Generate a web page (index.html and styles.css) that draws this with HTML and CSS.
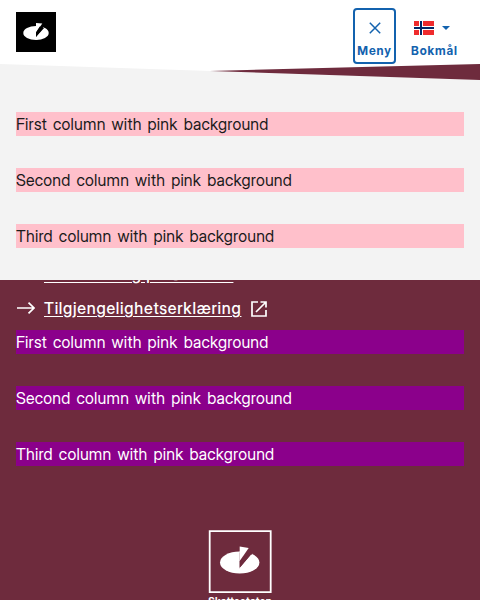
FILE: index.html
```html
<!DOCTYPE html>
<html lang="nb">
<head>
<meta charset="utf-8">
<title>Skatteetaten</title>
<link rel="stylesheet" href="styles.css">
</head>
<body>
<header class="header">
  <svg class="logo" viewBox="0 0 40 40" aria-hidden="true"><path fill="#000" d="M0 0h40v40H0z"/><ellipse cx="20" cy="21" rx="12.700" ry="6.900" fill="#fff"/><path d="M20 15.500v12l8-10.500-3-5h-3z" fill="#000"/><path d="M20 11l6.300.4-6.300 9z" fill="#fff"/><path d="M20 27.900v-3.500l7-8 3 1.500v5z" fill="#fff"/><path d="M20 20.500v4.500l7.500-8.500-3.700-2z" fill="#000"/></svg>
  <div class="actions">
    <button class="action action-open">
      <svg class="close" viewBox="0 0 12 12"><path d="M.8.8l10.400 10.400M11.200.8L.8 11.200"/></svg>
      <span>Meny</span>
    </button>
    <button class="action">
      <span class="language">
        <svg class="flag" viewBox="0 0 20 14"><path fill="#ef2b2d" d="M0 0h20v14H0z"/><path fill="#fff" d="M5 0h4v14H5zM0 5h20v4H0z"/><path fill="#002868" d="M6 0h2v14H6zM0 6h20v2H0z"/></svg>
        <svg class="caret" viewBox="0 0 8 4"><path d="M0 0h8L4 4z"/></svg>
      </span>
      <span>Bokmål</span>
    </button>
  </div>
</header>
<main class="main">
  <svg class="wedge" viewBox="0 0 480 16" preserveAspectRatio="none"><path fill="#fff" d="M0 0h480v16z"/><path fill="#6e2b3d" d="M480 0L210 7l270 9z"/></svg>
  <div class="columns">
    <div>First column with pink background</div>
    <div>Second column with pink background</div>
    <div>Third column with pink background</div>
  </div>
</main>
<footer class="footer">
  <div class="links">
    <a class="link" href="#"><svg class="arrow" viewBox="0 0 18 12"><path d="M0 6h17M11.500.6L17 6l-5.500 5.400"/></svg><span>Sikkerhet og personvern</span></a>
    <a class="link" href="#"><svg class="arrow" viewBox="0 0 18 12"><path d="M0 6h17M11.500.6L17 6l-5.500 5.400"/></svg><span>Tilgjengelighetserklæring</span><svg class="external" viewBox="0 0 16 16"><path d="M7 1H1v14h14V9M9.500 1H15v5.500M15 1L5 11"/></svg></a>
  </div>
  <div class="columns columns-purple">
    <div>First column with pink background</div>
    <div>Second column with pink background</div>
    <div>Third column with pink background</div>
  </div>
  <div class="brand">
    <svg class="emblem" viewBox="0 0 64 64"><path d="M1.700 1.200h61v61h-61z" fill="none" stroke="#fff" stroke-width="1.800"/><ellipse cx="31.700" cy="32.500" rx="19.700" ry="11" fill="#fff"/><path d="M31.700 32.500v-10l5-4h3l5 5-13 15z" fill="#6e2b3d"/><path d="M31.700 16.500l9 1.500-9 13z" fill="#fff"/><path d="M31.700 38.500v-.5l11.300-13.500 4 3-4 7z" fill="#fff"/><path d="M31.700 31.500v6L43 24.500l-3-1.500z" fill="#6e2b3d"/></svg>
    <span>Skatteetaten</span>
  </div>
</footer>
</body>
</html>
```
FILE: styles.css
```css
* { box-sizing: border-box; }
body {
  margin: 0;
  height: 600px;
  overflow: hidden;
  font: 16px/24px "Inter Display", Inter, sans-serif;
  letter-spacing: .2px;
  word-spacing: 1.8px;
  color: #1b1b1b;
  background: #6e2b3d;
}
svg { display: block; flex: none; }
.header {
  display: flex;
  justify-content: space-between;
  height: 64px;
  padding: 8px 21px 0 16px;
  background: #fff;
}
.logo { width: 40px; height: 40px; margin-top: 4px; }
.actions { display: flex; gap: 14px; }
.action {
  display: flex;
  flex-direction: column;
  align-items: center;
  width: 49px;
  height: 56px;
  padding: 12px 0 0;
  border: 0;
  background: none;
  color: #1362ae;
  font: 700 12px/16px "Inter Display", Inter, sans-serif;
  letter-spacing: .9px;
  white-space: nowrap;
}
.action > span:last-child { margin-top: auto; margin-bottom: 5px; }
.action-open {
  width: 43px;
  border: 2px solid #1362ae;
  border-radius: 4px;
}
.action-open > span:last-child { margin-bottom: 3px; }
.close { width: 12px; height: 12px; fill: none; stroke: #1362ae; stroke-width: 1.5; }
.language { display: flex; align-items: center; gap: 8px; margin: 1px 6px 0 0; }
.flag { width: 20px; height: 14px; }
.caret { width: 8px; height: 4px; fill: #1362ae; }
.main { height: 216px; background: #f3f3f3; }
.wedge { width: 100%; height: 16px; }
.columns { display: grid; gap: 32px; margin: 32px 16px 0; }
.columns > div { background: pink; }
.footer { color: #fff; }
.links {
  display: flex;
  flex-direction: column;
  justify-content: flex-end;
  gap: 10px;
  height: 40px;
  overflow: hidden;
}
.link {
  display: flex;
  flex: none;
  align-items: center;
  height: 24px;
  padding-left: 17px;
  color: inherit;
  font-weight: 500;
  letter-spacing: .73px;
  word-spacing: 0;
  text-underline-offset: 2px;
}
.arrow { width: 18px; height: 12px; margin-right: 9px; fill: none; stroke: #fff; stroke-width: 1.7; }
.external { width: 16px; height: 16px; margin: 1px 0 0 10px; fill: none; stroke: #fff; stroke-width: 1.7; }
.columns-purple { margin-top: 10px; }
.columns-purple > div { background: darkmagenta; }
.brand {
  display: flex;
  flex-direction: column;
  align-items: center;
  margin-top: 64px;
  font: 700 10px/14px "Inter Display", Inter, sans-serif;
  letter-spacing: .3px;
}
.emblem { width: 64px; height: 64px; }
```
